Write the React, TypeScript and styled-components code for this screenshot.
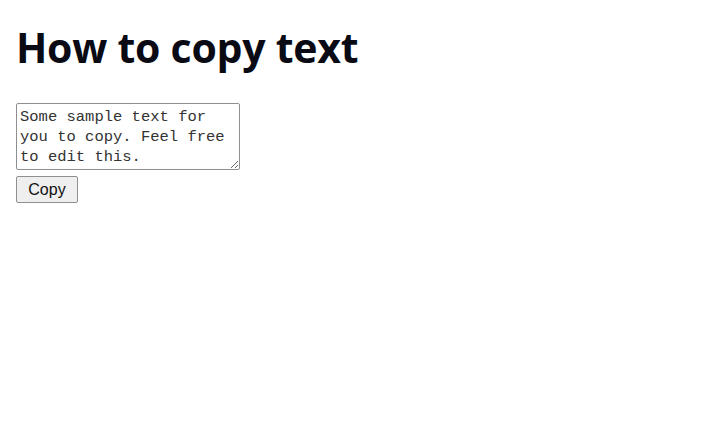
import styled, { createGlobalStyle } from 'styled-components';

const GlobalStyle = createGlobalStyle`
  body {
    margin: 0;
    background: #ffffff;
    font-family: 'Open Sans', 'Liberation Sans', sans-serif;
  }
`;

const Page = styled.div`
  padding: 19px 16px;
`;

const Title = styled.h1`
  margin: 0 0 28px;
  font-family: 'Open Sans', sans-serif;
  font-size: 41px;
  line-height: 56px;
  font-weight: 700;
  color: #0a0a14;
  letter-spacing: -0.25px;
`;

const Form = styled.div`
  display: flex;
  flex-direction: column;
  align-items: flex-start;
  gap: 6px;
`;

const TextBox = styled.textarea`
  box-sizing: border-box;
  width: 224px;
  height: 67px;
  padding: 3px 3px;
  border: 1px solid #8f8f8f;
  border-radius: 2px;
  font-family: 'Liberation Mono', monospace;
  font-size: 15.5px;
  line-height: 20px;
  color: #333;
  resize: both;
  overflow: hidden;
`;

const CopyButton = styled.button`
  box-sizing: border-box;
  width: 62px;
  height: 27px;
  padding: 0;
  border: 1px solid #8f8f8f;
  border-radius: 2px;
  background: #efefef;
  font-family: 'Liberation Sans', Arial, sans-serif;
  font-size: 16px;
  color: #111;
`;

export default function App() {
  return (
    <Page>
      <GlobalStyle />
      <Title>How to copy text</Title>
      <Form>
        <TextBox defaultValue="Some sample text for you to copy. Feel free to edit this." />
        <CopyButton>Copy</CopyButton>
      </Form>
    </Page>
  );
}
